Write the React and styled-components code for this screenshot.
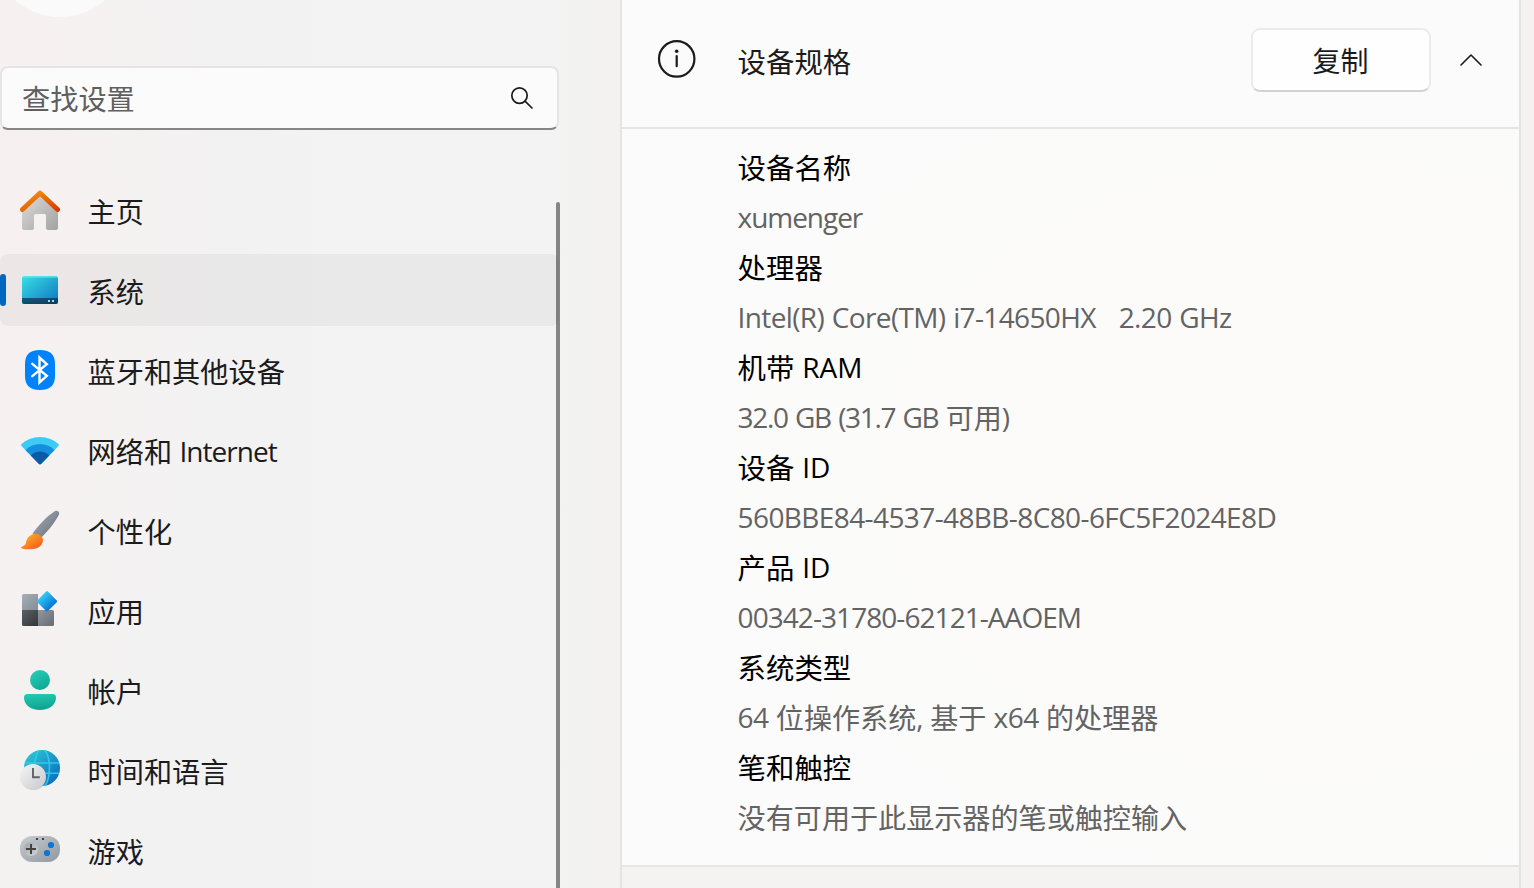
import React from "react";
import styled, { createGlobalStyle } from "styled-components";

const Global = createGlobalStyle`
  * { box-sizing: border-box; }
  body {
    margin: 0;
    overflow: hidden;
    font-family: "Noto Sans", "Noto Sans CJK SC", sans-serif;
    font-size: 28px;
    color: #1b1b1b;
  }
`;

const Window = styled.div`
  display: flex;
  width: 1534px;
  height: 888px;
  overflow: hidden;
  background:
    radial-gradient(ellipse 220px 620px at 0 200px, #f6f1f0 10%, rgba(246, 241, 240, 0) 100%),
    linear-gradient(90deg, #f4f2f0 0, #f3f2f2 120px, #f3f2f3 240px, #f3f3f3 340px, #f3f3f3 540px, #f3f2f1 620px, #f4f2f0 1300px, #f5f1f0 1500px);
`;

const Sidebar = styled.aside`
  position: relative;
  display: flex;
  flex-direction: column;
  width: 560px;
  height: 888px;
`;

const Profile = styled.div`
  height: 66px;
`;

const Avatar = styled.div`
  width: 136px;
  height: 136px;
  margin: -119px 0 0 -8px;
  border-radius: 50%;
  background: #fbfafa;
`;

const SearchBox = styled.div`
  display: flex;
  flex: none;
  align-items: center;
  justify-content: space-between;
  width: 559px;
  height: 64px;
  padding: 1px 23px 0 20px;
  border: 2px solid #e6e4e4;
  border-bottom-color: #868686;
  border-radius: 8px;
  background: #fbfbfb;
  color: #5f5f5f;
`;

const Nav = styled.nav`
  display: flex;
  flex-direction: column;
  gap: 8px;
  padding-top: 44px;
`;

const NavItem = styled.div`
  display: flex;
  flex: none;
  align-items: center;
  width: 559px;
  height: 72px;
  border-radius: 8px;
  background: ${(p) => (p.$active ? "rgba(0, 0, 0, 0.04)" : "transparent")};
`;

const Indicator = styled.span`
  width: 6px;
  height: 32px;
  margin-right: 14px;
  border-radius: 3px;
  background: ${(p) => (p.$active ? "#0067c0" : "transparent")};
`;

const NavIcon = styled.svg`
  flex: none;
  width: 40px;
  height: 40px;
  margin-right: 27.5px;
`;

const Label = styled.span`
  padding-top: ${(p) => p.$drop || 0}px;
  font-size: 28.2px;
  line-height: 40px;
  white-space: pre;
`;

const Latin = styled.span`
  position: relative;
  top: -1px;
  font-family: "Open Sans", "Noto Sans", sans-serif;
  font-size: 28px;
  letter-spacing: ${(p) => p.$track}px;
  word-spacing: ${(p) => p.$gap || 0}px;
`;

const ScrollThumb = styled.div`
  position: absolute;
  top: 202px;
  right: 0;
  bottom: -4px;
  width: 4px;
  border-radius: 2px;
  background: rgba(0, 0, 0, 0.45);
`;

const Content = styled.main`
  display: flex;
  flex-direction: column;
  width: 901px;
  height: 888px;
  margin-left: 60px;
  border: solid #e5e4e4;
  border-width: 0 2px;
`;

const CardHeader = styled.header`
  display: flex;
  flex: none;
  align-items: center;
  height: 129px;
  padding: 0 36px 7px 35px;
  border-bottom: 2px solid #e6e5e5;
  background: #fbfbfb;
`;

const InfoIcon = styled.svg`
  width: 40px;
  height: 40px;
  margin-right: 40.6px;
`;

const Title = styled.div`
  flex: 1;
  padding-top: 1px;
  font-size: 28.4px;
`;

const CopyButton = styled.button`
  width: 180px;
  height: 64px;
  margin-right: 28px;
  padding: 0 1px 0 0;
  border: 2px solid #ebebeb;
  border-bottom-color: #d2d2d2;
  border-radius: 9px;
  background: #fefefe;
  color: #1b1b1b;
  font: inherit;
`;

const Chevron = styled.svg`
  width: 24px;
  height: 24px;
`;

const Details = styled.dl`
  flex: none;
  height: 738px;
  margin: 0;
  padding: 14px 0 0 115.6px;
  border-bottom: 2px solid #e7e4e3;
  background: radial-gradient(ellipse 620px 420px at 700px 340px, #fcfbf9 30%, #fbfbfb 100%);
`;

const Term = styled.dt`
  height: 50px;
  font-size: 28.4px;
  line-height: 50px;
  color: #000;
  white-space: pre;
`;

const Value = styled.dd`
  height: 50px;
  margin: 0;
  font-size: 28.1px;
  line-height: 50px;
  color: #636363;
  white-space: pre;
`;

const NextCard = styled.div`
  flex: 1;
  background: #f4f3f2;
`;

function Mixed({ text, track = -0.6, gap = 0 }) {
  return text
    .split(/([\x20-\x7e]+)/)
    .filter(Boolean)
    .map((run, i) =>
      /^[\x20-\x7e]/.test(run) ? <Latin key={i} $track={track} $gap={gap}>{run}</Latin> : <React.Fragment key={i}>{run}</React.Fragment>
    );
}

const Grad = ({ id, from, to, x2 = 1, y2 = 1 }) => (
  <linearGradient id={id} x1="0" y1="0" x2={x2} y2={y2}>
    <stop offset="0" stopColor={from} />
    <stop offset="1" stopColor={to} />
  </linearGradient>
);

const icons = {
  home: (
    <>
      <defs>
        <Grad id="wall" from="#dedede" to="#a2a2a2" />
        <Grad id="roof" from="#f59a0c" to="#d83b01" />
      </defs>
      <path d="M2 20 20 3l18 17v17.500a2.500 2.500 0 0 1-2.500 2.500H28.500a2.500 2.500 0 0 1-2.500-2.500V25.500A1.500 1.500 0 0 0 24.500 24h-9a1.500 1.500 0 0 0-1.500 1.500v12a2.500 2.500 0 0 1-2.500 2.500H4.500A2.500 2.500 0 0 1 2 37.500Z" fill="url(#wall)" />
      <path d="M2.400 19.500 20 2.900l17.600 16.600" fill="none" stroke="url(#roof)" strokeWidth="4.800" strokeLinecap="round" strokeLinejoin="round" />
    </>
  ),
  system: (
    <>
      <defs>
        <Grad id="screen" from="#38e0e6" to="#0f74bf" />
        <Grad id="base" from="#15587c" to="#0c3b5c" />
        <clipPath id="panel"><rect x="2" y="6" width="36" height="28" rx="2.500" /></clipPath>
      </defs>
      <g clipPath="url(#panel)">
        <rect x="2" y="6" width="36" height="28" fill="url(#screen)" />
        <rect x="2" y="6" width="36" height="1.700" fill="#7beaf0" opacity=".65" />
        <rect x="2" y="28" width="36" height="6" fill="url(#base)" />
        <rect x="28" y="30" width="2" height="2" fill="#a9d6e6" />
        <rect x="32" y="30" width="2" height="2" fill="#a9d6e6" />
      </g>
    </>
  ),
  bluetooth: (
    <>
      <path d="M20 0C31 0 35 5.500 35 14v12c0 8.500-4 14-15 14S5 34.500 5 26V14C5 5.500 9 0 20 0Z" fill="#0082fc" />
      <path d="m12.300 13.800 14.500 12-7.300 6.700V7.500l7.300 6.700-14.500 12" fill="none" stroke="#fff" strokeWidth="2.400" strokeLinecap="round" strokeLinejoin="miter" />
    </>
  ),
  network: (
    <>
      <defs>
        <clipPath id="fan"><path d="M1.500 16.100Q.400 15 1.600 13.900 9.500 7 20 7t18.400 6.900q1.200 1.100.100 2.200L21.200 33.700q-1.200 1.300-2.400 0Z" /></clipPath>
      </defs>
      <g clipPath="url(#fan)">
        <rect width="40" height="40" fill="#3ccbf4" />
        <circle cx="20" cy="34" r="20" fill="#1490df" />
        <circle cx="20" cy="34" r="12.500" fill="#0c59a4" />
      </g>
    </>
  ),
  brush: (
    <>
      <defs>
        <Grad id="handle" from="#a7b0b8" to="#626a73" />
        <Grad id="tip" from="#ffbd2b" to="#f2501c" />
      </defs>
      <path d="M12.600 23.500C18 15.500 26.500 6.500 34.700 1.200c2.800-1.500 5.500.800 4.100 3.800C34.500 13 27 22.500 19.200 29.500Z" fill="url(#handle)" />
      <path d="M12.800 24.200C8 26 6.500 29.800 6 32.500c-.400 2.200-1.700 3-3.800 4-1.600.700-1.400 1.600-.100 1.900 4.400 1.200 10.800 1.200 14.400-.100 5-1.700 7.500-6.300 6-10.300-1.400-3.700-5.700-5.300-9.700-3.800Z" fill="url(#tip)" />
    </>
  ),
  apps: (
    <>
      <defs>
        <Grad id="tileA" from="#a5adb5" to="#858e97" />
        <Grad id="tileB" from="#5a5f64" to="#34373a" />
        <Grad id="tileC" from="#90979f" to="#656c74" />
        <linearGradient id="gem" x1="0" y1=".5" x2="1" y2=".5">
          <stop offset="0" stopColor="#31c9f7" />
          <stop offset="1" stopColor="#0876d8" />
        </linearGradient>
      </defs>
      <path d="M3.500 4H18v16H2V5.500A1.500 1.500 0 0 1 3.500 4Z" fill="url(#tileA)" />
      <path d="M2 20h16v16H3.500A1.500 1.500 0 0 1 2 34.500Z" fill="url(#tileB)" />
      <path d="M18 20h14.500A1.500 1.500 0 0 1 34 21.500v13a1.500 1.500 0 0 1-1.500 1.500H18Z" fill="url(#tileC)" />
      <rect x="19.500" y="3.800" width="15" height="15" rx="1.200" transform="rotate(45 27 11.300)" fill="url(#gem)" />
    </>
  ),
  account: (
    <>
      <defs>
        <Grad id="head" from="#27d1bd" to="#12a896" x2={0.6} />
        <Grad id="torso" from="#23cbb6" to="#10a48f" x2={0.2} />
      </defs>
      <circle cx="20" cy="10" r="10" fill="url(#head)" />
      <path d="M7.500 24h25a3.500 3.500 0 0 1 3.500 3.500C36 35 29.500 40 20 40S4 35 4 27.500A3.500 3.500 0 0 1 7.500 24Z" fill="url(#torso)" />
    </>
  ),
  time: (
    <>
      <defs>
        <Grad id="globe" from="#2fd0d6" to="#0a62c0" />
        <Grad id="dial" from="#f6f6f7" to="#c5c8cb" />
        <clipPath id="globeEdge"><circle cx="22" cy="18" r="18" /></clipPath>
      </defs>
      <circle cx="22" cy="18" r="18" fill="url(#globe)" />
      <g clipPath="url(#globeEdge)" fill="none" stroke="#34cfee" strokeWidth="1.600" opacity=".85">
        <ellipse cx="22" cy="18" rx="7.500" ry="19" />
        <path d="M4 13h36M4 23.300h36" />
      </g>
      <circle cx="13.500" cy="27" r="13" fill="#405565" opacity=".25" />
      <circle cx="13" cy="27" r="13" fill="url(#dial)" />
      <path d="M13 18v9.200h6.800" fill="none" stroke="#606365" strokeWidth="1.900" />
    </>
  ),
  gaming: (
    <>
      <defs>
        <Grad id="pad" from="#c8cdd1" to="#8f979f" />
        <Grad id="dpad" from="#a1a5a8" to="#d2d5d8" />
      </defs>
      <rect x="0" y="6" width="40" height="26" rx="12" fill="url(#pad)" />
      <circle cx="11" cy="19" r="7" fill="url(#dpad)" />
      <path d="M11 14v10M6 19h10" stroke="#414141" strokeWidth="2" />
      <rect x="16" y="8" width="2" height="2" fill="#414141" />
      <rect x="22" y="8" width="2" height="2" fill="#414141" />
      <circle cx="31" cy="15" r="3.100" fill="#0c75d6" />
      <circle cx="27" cy="23" r="3.100" fill="#0c75d6" />
    </>
  ),
};

const navItems = [
  ["home", "主页"],
  ["system", "系统"],
  ["bluetooth", "蓝牙和其他设备"],
  ["network", "网络和 Internet"],
  ["brush", "个性化"],
  ["apps", "应用"],
  ["account", "帐户"],
  ["time", "时间和语言"],
  ["gaming", "游戏"],
];

const specs = [
  { term: "设备名称", value: "xumenger", track: -1.05 },
  { term: "处理器", value: "Intel(R) Core(TM) i7-14650HX   2.20 GHz", track: -0.63, gap: 1 },
  { term: "机带 RAM", value: "32.0 GB (31.7 GB 可用)", track: -1.35, gap: 1.5 },
  { term: "设备 ID", value: "560BBE84-4537-48BB-8C80-6FC5F2024E8D", track: -0.6 },
  { term: "产品 ID", value: "00342-31780-62121-AAOEM", track: -0.94 },
  { term: "系统类型", value: "64 位操作系统, 基于 x64 的处理器", track: -0.5, gap: 0.4 },
  { term: "笔和触控", value: "没有可用于此显示器的笔或触控输入" },
];

export default function App() {
  return (
    <Window>
      <Global />
      <Sidebar>
        <Profile><Avatar /></Profile>
        <SearchBox>
          <Label>查找设置</Label>
          <svg width="24" height="24" viewBox="0 0 24 24" fill="none" stroke="#1b1b1b" strokeWidth="1.700" strokeLinecap="round">
            <circle cx="9.500" cy="8.600" r="7.700" />
            <path d="m15 14.200 7 6.800" />
          </svg>
        </SearchBox>
        <Nav>
          {navItems.map(([icon, text]) => (
            <NavItem key={icon} $active={icon === "system"}>
              <Indicator $active={icon === "system"} />
              <NavIcon viewBox="0 0 40 40">{icons[icon]}</NavIcon>
              <Label $drop={3}><Mixed text={text} track={-0.95} gap={1} /></Label>
            </NavItem>
          ))}
        </Nav>
        <ScrollThumb />
      </Sidebar>
      <Content>
        <CardHeader>
          <InfoIcon viewBox="0 0 40 40">
            <circle cx="19.700" cy="18.900" r="17.700" fill="none" stroke="#1b1b1b" strokeWidth="2.200" />
            <circle cx="19.700" cy="11.300" r="1.800" fill="#1b1b1b" />
            <path d="M19.700 16v10.200" stroke="#1b1b1b" strokeWidth="2.200" strokeLinecap="round" />
          </InfoIcon>
          <Title>设备规格</Title>
          <CopyButton>复制</CopyButton>
          <Chevron viewBox="0 0 24 24">
            <path d="m2 17 10-10 10 10" fill="none" stroke="#1b1b1b" strokeWidth="1.600" strokeLinecap="round" strokeLinejoin="round" />
          </Chevron>
        </CardHeader>
        <Details>
          {specs.map(({ term, value, track, gap }) => (
            <React.Fragment key={term}>
              <Term><Mixed text={term} track={-0.1} gap={0.8} /></Term>
              <Value><Mixed text={value} track={track} gap={gap} /></Value>
            </React.Fragment>
          ))}
        </Details>
        <NextCard />
      </Content>
    </Window>
  );
}
